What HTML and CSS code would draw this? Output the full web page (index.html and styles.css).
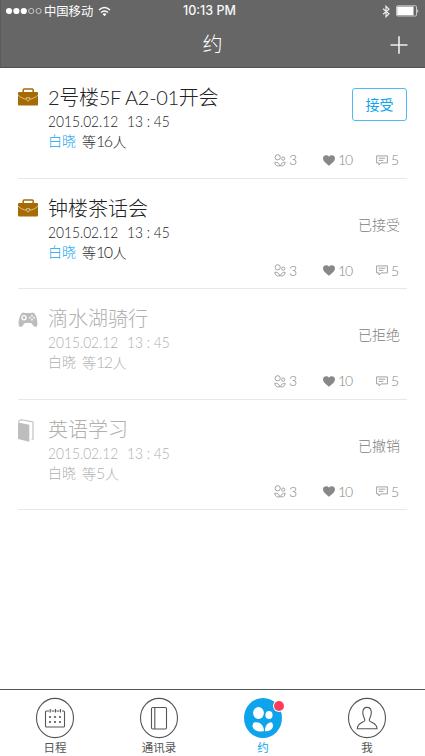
FILE: index.html
```html
<!DOCTYPE html>
<html lang="zh-CN">
<head>
<meta charset="utf-8">
<meta name="viewport" content="width=device-width, initial-scale=1">
<title>约</title>
<link rel="stylesheet" href="styles.css">
</head>
<body>
<svg class="defs" aria-hidden="true">
  <symbol id="briefcase" viewBox="0 0 20 18"><path d="M5.2 4V2Q5.2 1 6.2 1h8q1 0 1 1v2" fill="none" stroke="currentColor" stroke-width="1.5"/><rect y="4" width="20" height="13.5" rx="1" fill="currentColor"/><path d="M0 7.2C3 9.8 6 11 8.5 11.2M20 7.2C17 9.8 14 11 11.7 11.2" fill="none" stroke="#e9d3aa" stroke-width=".8"/><path d="M8.4 9.8h3.4v1.8l-1.7 1.6-1.7-1.6z" fill="#a66b05" stroke="#efdcb8" stroke-width=".8"/></symbol>
  <symbol id="gamepad" viewBox="0 0 20 16"><path d="M4 1Q5.500 0 7 1.100h6Q14.500 0 16 1c2 1.500 3.500 7 3.400 11 0 3-2 3.800-3.600 2.200L13.200 11H6.800L4.200 14.200C2.600 15.800.600 15 .600 12 .500 8 2 2.500 4 1z" fill="currentColor"/><circle cx="6" cy="5.700" r="2.100" fill="none" stroke="#fff" stroke-width="1.300"/><g fill="#fff"><circle cx="14" cy="3.700" r=".9"/><circle cx="14" cy="7.700" r=".9"/><circle cx="12" cy="5.700" r=".9"/><circle cx="16" cy="5.700" r=".9"/></g></symbol>
  <symbol id="book" viewBox="0 0 16 23"><path d="M0 3.400 11.300 5.800V22.800L0 20z" fill="currentColor"/><path d="M.4 3.200Q1 1 3.500.700L15 3v17.200h-1.500" fill="none" stroke="currentColor" stroke-width="1.100"/></symbol>
  <symbol id="people" viewBox="0 0 12 13"><g fill="none" stroke="currentColor" stroke-width=".9"><circle cx="3.700" cy="3.300" r="2.600"/><circle cx="9.200" cy="4.600" r="1.600"/><path d="M.8 8.200Q5.200 8 5.700 11.900 1.200 12.700.8 8.200zM11.200 8.200Q7.500 8 6.500 11.900 10.800 12.500 11.200 8.200z"/></g></symbol>
  <symbol id="heart" viewBox="0 0 12 11"><path d="M6 10.700C3.500 8.800 0 6.300 0 3.300 0 .2 4.200-.8 6 1.800 7.800-.8 12 .2 12 3.300c0 3-3.500 5.500-6 7.400z" fill="currentColor"/></symbol>
  <symbol id="comment" viewBox="0 0 12 11"><path d="M.6.900h10.800v7H5L3 10V7.900H.6zM2.700 3.200h6.600M2.700 5.400h4.600" fill="none" stroke="currentColor" stroke-width=".9"/></symbol>
</svg>
<div class="app">
  <header class="header">
    <div class="status">
      <div class="status-left">
        <svg class="signal" viewBox="0 0 36 8"><g fill="#fff"><circle cx="3" cy="4" r="3.100"/><circle cx="10.400" cy="4" r="3.100"/><circle cx="17.800" cy="4" r="3.100"/></g><g fill="none" stroke="#ddd" stroke-width=".8"><circle cx="25.200" cy="4" r="2.600"/><circle cx="32.600" cy="4" r="2.600"/></g></svg>
        <span class="carrier">中国移动</span>
        <svg class="wifi" viewBox="0 0 13 11"><path d="M1 4Q6.500-1 12 4M3 6.500q3.500-3 7 0" fill="none" stroke="#fff" stroke-width="1.500"/><path d="M4.500 8q2-1.500 4 0l-2 2.200z" fill="#fff"/></svg>
      </div>
      <span class="clock">10:13 PM</span>
      <div class="status-right">
        <svg class="bluetooth" viewBox="0 0 8 12"><path d="M1 3.300l6 5-3 2.900V.8l3 2.900-6 5" fill="none" stroke="#eee" stroke-width="1.200"/></svg>
        <svg class="battery" viewBox="0 0 23 12"><rect x=".5" y=".8" width="20" height="10.200" rx="1" fill="none" stroke="#ddd" stroke-width=".8"/><rect x="1.200" y="1.600" width="16.300" height="8.600" fill="#fff"/><path d="M21.300 4q2 2 0 4" fill="#ddd"/></svg>
      </div>
    </div>
    <div class="nav"><h1>约</h1><svg class="plus" viewBox="0 0 18 18"><path d="M.5 9h17M9 .3v17.400" stroke="#eee" stroke-width="1.600"/></svg></div>
  </header>
  <main class="list">
    <article class="item">
      <div class="kind"><svg class="briefcase"><use href="#briefcase"/></svg></div>
      <div class="info"><h2 class="mixed">2号楼5F A2-01开会</h2><p class="date"><span class="day">2015.02.12</span><span class="time">13 : 45</span></p><p class="who"><a>白晓</a><span>等<b>16</b>人</span></p></div>
      <button class="accept">接受</button>
      <div class="stats"><span class="s-people"><svg><use href="#people"/></svg>3</span><span class="s-heart"><svg><use href="#heart"/></svg>10</span><span class="s-comment"><svg><use href="#comment"/></svg>5</span></div>
    </article>
    <article class="item">
      <div class="kind"><svg class="briefcase"><use href="#briefcase"/></svg></div>
      <div class="info"><h2>钟楼茶话会</h2><p class="date"><span class="day">2015.02.12</span><span class="time">13 : 45</span></p><p class="who"><a>白晓</a><span>等<b>10</b>人</span></p></div>
      <span class="state">已接受</span>
      <div class="stats"><span class="s-people"><svg><use href="#people"/></svg>3</span><span class="s-heart"><svg><use href="#heart"/></svg>10</span><span class="s-comment"><svg><use href="#comment"/></svg>5</span></div>
    </article>
    <article class="item muted">
      <div class="kind"><svg class="gamepad"><use href="#gamepad"/></svg></div>
      <div class="info"><h2>滴水湖骑行</h2><p class="date"><span class="day">2015.02.12</span><span class="time">13 : 45</span></p><p class="who"><a>白晓</a><span>等<b>12</b>人</span></p></div>
      <span class="state">已拒绝</span>
      <div class="stats"><span class="s-people"><svg><use href="#people"/></svg>3</span><span class="s-heart"><svg><use href="#heart"/></svg>10</span><span class="s-comment"><svg><use href="#comment"/></svg>5</span></div>
    </article>
    <article class="item muted">
      <div class="kind"><svg class="book"><use href="#book"/></svg></div>
      <div class="info"><h2>英语学习</h2><p class="date"><span class="day">2015.02.12</span><span class="time">13 : 45</span></p><p class="who"><a>白晓</a><span>等<b>5</b>人</span></p></div>
      <span class="state">已撤销</span>
      <div class="stats"><span class="s-people"><svg><use href="#people"/></svg>3</span><span class="s-heart"><svg><use href="#heart"/></svg>10</span><span class="s-comment"><svg><use href="#comment"/></svg>5</span></div>
    </article>
  </main>
  <nav class="tabs">
    <a class="tab"><svg viewBox="0 0 40 42"><g fill="none" stroke="currentColor" stroke-width="1.100"><ellipse cx="20" cy="21" rx="18.500" ry="19.600"/><path d="M14 14h-2.500q-1 0-1 1v14q0 1 1 1h17q1 0 1-1V15q0-1-1-1H27M16.500 14h3M21.500 14h3M15.200 12v3.500M20.500 12v3.500M25.500 12v3.500"/></g><g fill="currentColor"><circle cx="15" cy="20" r="1.100"/><circle cx="20" cy="20" r="1.100"/><circle cx="25" cy="20" r="1.100"/><circle cx="15" cy="25" r="1.100"/><circle cx="20" cy="25" r="1.100"/><circle cx="25" cy="25" r="1.100"/></g></svg><span>日程</span></a>
    <a class="tab"><svg viewBox="0 0 40 42"><g fill="none" stroke="currentColor" stroke-width="1.100"><ellipse cx="20" cy="21" rx="18.500" ry="19.600"/><rect x="12.500" y="10.500" width="15" height="21.500" rx="1.200"/><path d="M15.800 10.500V32"/></g></svg><span>通讯录</span></a>
    <a class="tab active"><svg viewBox="0 0 40 42"><ellipse cx="20" cy="21" rx="19" ry="20" fill="currentColor"/><g fill="#fff"><ellipse cx="15.500" cy="16" rx="5.400" ry="5.900"/><ellipse cx="26" cy="18" rx="3.600" ry="4"/><path d="M11.500 25.300C17 24.500 21 28 21 34.300 15 34.800 10.500 33.500 9.500 29.500 9.500 27.500 10.200 26 11.500 25.300zM28.300 25.300C24.500 25.500 22 28.500 22 34.300 26.500 34.300 29.800 32.500 30 28.800 30 27 29.300 25.700 28.300 25.300z"/></g></svg><i class="badge"></i><span>约</span></a>
    <a class="tab"><svg viewBox="0 0 40 42"><g fill="none" stroke="currentColor" stroke-width="1.100"><ellipse cx="20" cy="21" rx="18.500" ry="19.600"/><path d="M17.800 23.500c.2-2-2-3.300-2-8 0-6.800 8.500-6.800 8.500 0 0 4.700-2.200 6-2 8 .2 2.200 7.700 1.700 7.700 8.300H10.300c0-6.600 7.300-6.100 7.500-8.300z"/></g></svg><span>我</span></a>
  </nav>
</div>
</body>
</html>
```
FILE: styles.css
```css
* { box-sizing: border-box; }
body { margin: 0; background: #fff; font-family: Lato, "Noto Sans CJK SC", sans-serif; font-weight: 300; color: #222; }
h1, h2, p { margin: 0; font-weight: inherit; }
svg { display: block; flex: none; }
.defs { width: 0; height: 0; position: absolute; }
.app { width: 425px; height: 756px; display: flex; flex-direction: column; }

.header { height: 68px; background: #666; border-bottom: 1px solid #505050; border-left: 1px solid #5b5b5b; color: #fff; flex: none; }
.status { height: 20px; display: grid; grid-template-columns: 177px auto 1fr; align-items: center; padding: 0 6px 0 5px; }
.status-left, .status-right { display: flex; align-items: center; }
.status-right { justify-content: flex-end; gap: 6px; }
.signal { width: 36px; height: 8px; }
.carrier { font: 400 12.300px/20px "Noto Sans CJK SC", sans-serif; margin-left: 2px; }
.wifi { width: 13px; height: 11px; margin-left: 5px; }
.clock { font: 500 12.500px/22px Inter, "Liberation Sans", sans-serif; color: #f8f8f8; }
.bluetooth { width: 8px; height: 13px; }
.battery { width: 23px; height: 12px; }
.nav { height: 47px; display: grid; grid-template-columns: 1fr auto 1fr; align-items: center; padding: 1px 17px 0 16px; }
.nav h1 { grid-column: 2; font: 300 20px/30px "Noto Sans CJK SC", sans-serif; }
.plus { width: 18px; height: 18px; justify-self: end; margin-top: 2px; }

.list { padding: 0 18px; flex: 1; }
.item { height: 110.500px; border-bottom: 1px solid #e8e8e8; display: grid; grid-template-columns: 30px 1fr auto; grid-template-rows: 83px 1fr; }
.kind { padding-top: 20px; color: #a66b05; }
.briefcase { width: 20px; height: 18px; }
.gamepad { width: 20px; height: 16px; margin-top: 3px; }
.book { width: 16px; height: 23px; margin-top: -1px; }
.info { padding-top: 15px; white-space: nowrap; }
.info h2 { font-size: 20px; line-height: 28px; height: 28px; }
.info .mixed { letter-spacing: -.3px; }
.date { font-size: 16px; line-height: 20px; height: 20px; display: flex; }
.date span { transform: scaleX(.86); transform-origin: left; }
.day { width: 79px; }
.who { font-size: 14px; line-height: 20px; height: 20px; display: flex; gap: 6px; }
.who b { font-size: 16px; font-weight: 300; letter-spacing: -1.500px; margin-right: 1px; }
.who a { color: #12a3ef; }
.muted .info, .muted .who a { color: #b0b0b0; }
.muted .kind { color: #bdbdbd; }
.accept { width: 55px; height: 33px; margin-top: 20px; padding: 0; border: 1px solid #4dbcf5; border-radius: 3px; background: #fff; color: #12a3ef; font: 400 14px/29px "Noto Sans CJK SC", sans-serif; }
.state { padding: 36px 7px 0 0; font-size: 14px; line-height: 20px; color: #808080; }
.stats { grid-column: 1 / -1; display: grid; grid-template-columns: 49px 53px 31px; justify-content: end; color: #858585; font-size: 14px; line-height: 18px; letter-spacing: -1px; }
.stats > span { display: flex; align-items: center; height: 18px; }
.stats svg { width: 12px; height: 11px; margin-right: 3px; color: #999; }
.stats .s-people svg { height: 13px; }
.stats .s-heart svg { color: #888; }

.tabs { height: 67px; flex: none; border-top: 1px solid #555; display: flex; justify-content: space-between; padding: 7px 38px 0 35px; color: #555; }
.tab { width: 40px; display: flex; flex-direction: column; align-items: center; position: relative; font-size: 11.500px; line-height: 17px; white-space: nowrap; }
.tab svg { width: 40px; height: 42px; }
.tab span { font-weight: 400; }
.active { color: #0ea4ec; }
.badge { position: absolute; top: 4px; right: -1px; width: 10px; height: 10px; border-radius: 50%; background: #ff3b5c; box-shadow: 0 0 0 1px #fff; }
```
